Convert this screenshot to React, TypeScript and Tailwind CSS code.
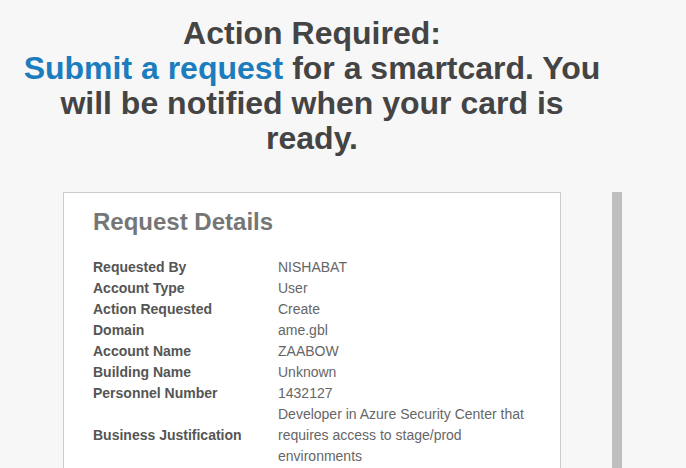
import React from "react";

const rows: [string, string[]][] = [
  ["Requested By", ["NISHABAT"]],
  ["Account Type", ["User"]],
  ["Action Requested", ["Create"]],
  ["Domain", ["ame.gbl"]],
  ["Account Name", ["ZAABOW"]],
  ["Building Name", ["Unknown"]],
  ["Personnel Number", ["1432127"]],
  ["Business Justification", ["Developer in Azure Security Center that requires access to stage/prod environments"]],
];

export default function App() {
  return (
    <div
      className="flex h-[468px] w-[686px] overflow-hidden bg-[#f7f7f7]"
      style={{ fontFamily: '"Liberation Sans", Arial, sans-serif' }}
    >
      <div className="w-[612px] shrink-0 pl-[12px]">
        <h1 className="mt-[16px] text-center text-[32px] font-bold leading-[35px] text-[#444444]">
          Action Required:
          <br />
          <span className="text-[#1b7dbd]">Submit a request</span> for a smartcard. You will be notified when your card is ready.
        </h1>
        <div className="mx-auto mt-[36px] w-[498px] border border-[#cccccc] bg-white px-[29px] pt-[16px] pb-[60px]">
          <h2 className="text-[24px] font-bold leading-[1.1] text-[#767676]">Request Details</h2>
          <div className="mt-[22px] grid grid-cols-[185px_252px] items-center text-[14px] leading-[21px]">
            {rows.map(([label, value]) => (
              <React.Fragment key={label}>
                <div className="font-bold text-[#555555]">{label}</div>
                <div className="text-[#666666]">{value}</div>
              </React.Fragment>
            ))}
          </div>
        </div>
      </div>
      <div className="mt-[192px] w-[10px] shrink-0 bg-[#bfbfbf]" />
    </div>
  );
}
